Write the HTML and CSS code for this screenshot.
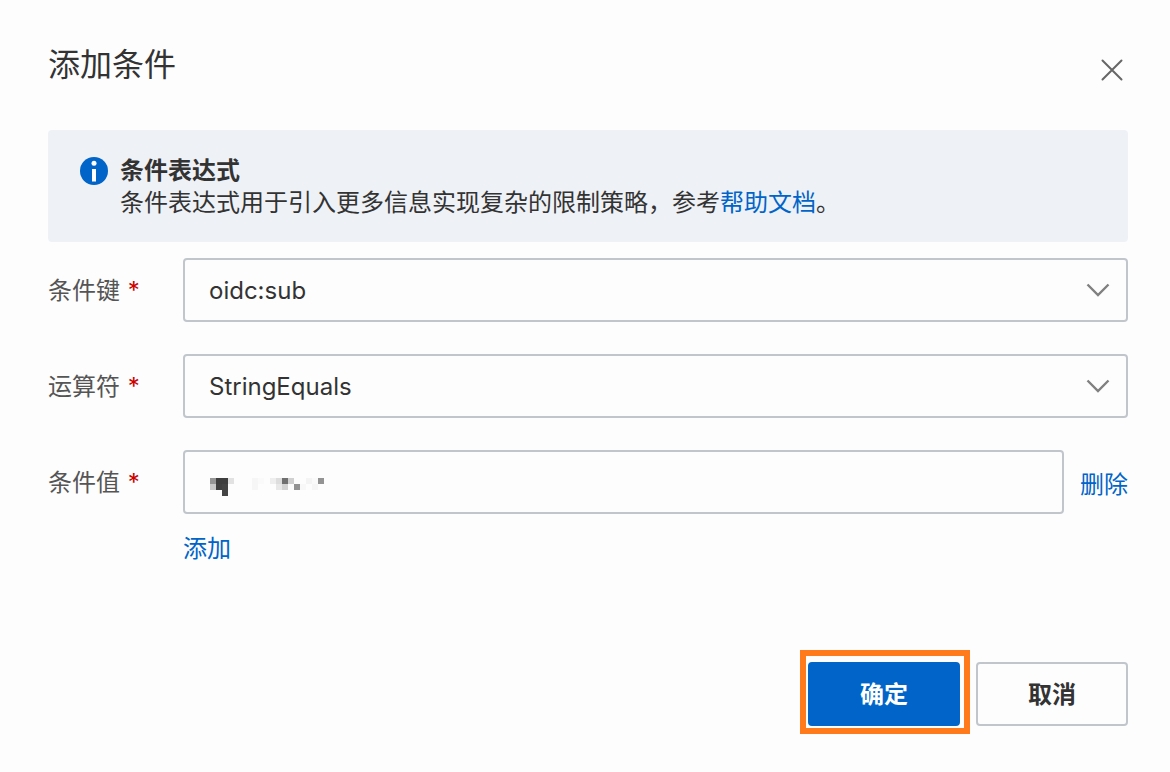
FILE: index.html
```html
<!DOCTYPE html>
<html lang="zh-CN">
  <head>
    <meta charset="UTF-8" />
    <meta name="viewport" content="width=device-width, initial-scale=1.0" />
    <title>添加条件</title>
    <link rel="stylesheet" href="styles.css">
  </head>
  <body>
    <div class="dialog">
      <div class="dialog-header">
        <h1 class="dialog-title">添加条件</h1>
        <button class="close-button" type="button" aria-label="关闭">
          <svg width="32" height="32" viewBox="0 0 32 32">
            <path d="M6.5 6.5L25.5 25.5M25.5 6.5L6.5 25.5" fill="none" stroke="#666666" stroke-width="2" stroke-linecap="round" />
          </svg>
        </button>
      </div>

      <div class="message">
        <svg class="message-icon" width="28" height="28" viewBox="0 0 28 28">
          <circle cx="14" cy="14" r="14" fill="#0064c8" />
          <circle cx="14" cy="6.3" r="2.5" fill="#ffffff" />
          <rect x="12" y="12" width="4" height="12.5" fill="#ffffff" />
        </svg>
        <div class="message-content">
          <h2 class="message-title">条件表达式</h2>
          <p>条件表达式用于引入更多信息实现复杂的限制策略，参考<a class="link" href="#">帮助文档</a>。</p>
        </div>
      </div>

      <form class="condition-form">
        <div class="form-row">
          <label class="form-label" for="conditionKey">条件键 <span class="required">*</span></label>
          <div class="select-box">
            <select class="field" id="conditionKey">
              <option>oidc:sub</option>
            </select>
            <svg class="arrow" width="24" height="14" viewBox="0 0 24 14">
              <path d="M1.5 1.5L12 12L22.5 1.5" fill="none" stroke="#808080" stroke-width="2.4" />
            </svg>
          </div>
        </div>

        <div class="form-row">
          <label class="form-label" for="operator">运算符 <span class="required">*</span></label>
          <div class="select-box">
            <select class="field" id="operator">
              <option>StringEquals</option>
            </select>
            <svg class="arrow" width="24" height="14" viewBox="0 0 24 14">
              <path d="M1.5 1.5L12 12L22.5 1.5" fill="none" stroke="#808080" stroke-width="2.4" />
            </svg>
          </div>
        </div>

        <div class="form-row">
          <label class="form-label" for="conditionValue">条件值 <span class="required">*</span></label>
          <div class="value-row">
            <div class="input-box">
              <input class="field" type="text" id="conditionValue" />
              <!-- masked value -->
              <svg class="mask" width="114" height="18" viewBox="0 0 19 3" shape-rendering="crispEdges">
                <rect x="0" y="0" width="1" height="1" fill="#969696" />
                <rect x="1" y="0" width="2" height="1" fill="#3e3e3e" />
                <rect x="3" y="0" width="1" height="1" fill="#e2e2e2" />
                <rect x="0" y="1" width="1" height="1" fill="#c9c9c9" />
                <rect x="1" y="1" width="1" height="1" fill="#404040" />
                <rect x="2" y="1" width="1" height="2" fill="#444444" />
                <rect x="8" y="0" width="1" height="1" fill="#fafafa" />
                <rect x="7" y="0" width="1" height="2" fill="#f6f6f6" />
                <rect x="10" y="0" width="1" height="1" fill="#eeeeee" />
                <rect x="11" y="0" width="1" height="1" fill="#dddddd" />
                <rect x="12" y="0" width="1" height="1" fill="#707070" />
                <rect x="13" y="0" width="1" height="1" fill="#d0d0d0" />
                <rect x="11" y="1" width="1" height="1" fill="#e8e8e8" />
                <rect x="12" y="1" width="1" height="1" fill="#d2d2d2" />
                <rect x="14" y="1" width="1" height="1" fill="#939393" />
                <rect x="15" y="1" width="1" height="1" fill="#f8f8f8" />
                <rect x="16" y="0" width="1" height="1" fill="#f4f4f4" />
                <rect x="17" y="0" width="1" height="1" fill="#fafafa" />
                <rect x="17" y="1" width="1" height="1" fill="#f6f6f6" />
                <rect x="18" y="0" width="1" height="1" fill="#939393" />
              </svg>
            </div>
            <button class="text-button" type="button">删除</button>
          </div>
        </div>
        <button class="text-button add-button" type="button">添加</button>

        <div class="dialog-footer">
          <div class="highlight">
            <button class="button button-primary" type="submit">确定</button>
          </div>
          <button class="button" type="button">取消</button>
        </div>
      </form>
    </div>
  </body>
</html>
```
FILE: styles.css
```css
* {
  box-sizing: border-box;
  margin: 0;
  padding: 0;
}
body {
  background-color: #fdfdfd;
  color: #333333;
  font-family: Inter, "Noto Sans CJK SC", sans-serif;
  font-size: 24px;
  line-height: 32px;
}
button,
input,
select {
  font: inherit;
  color: inherit;
}
button {
  cursor: pointer;
}
.dialog {
  padding: 40px 42px 40px 48px;
}
.dialog-header {
  display: flex;
  justify-content: space-between;
  align-items: center;
  height: 50px;
  margin-bottom: 40px;
}
.dialog-title {
  font-size: 32px;
  font-weight: 400;
  line-height: 50px;
}
.close-button {
  width: 32px;
  height: 32px;
  margin-top: 10px;
  background-color: transparent;
  border: none;
}
.close-button svg {
  display: block;
}
.message {
  display: flex;
  gap: 12px;
  padding: 25px 32px 23px;
  background-color: #eef1f6;
  border-radius: 4px;
}
.message-icon {
  flex-shrink: 0;
  margin-top: 2px;
}
.message-title {
  font-size: 24px;
  font-weight: 600;
}
.link {
  color: #0064c8;
  text-decoration: none;
}
.condition-form {
  margin-top: 16px;
}
.form-row {
  display: grid;
  grid-template-columns: 135px 1fr;
  align-items: center;
  margin-bottom: 32px;
}
.form-label {
  padding-top: 2px;
  color: #555555;
}
.required {
  margin-left: 1px;
  color: #cc0000;
}
.select-box,
.input-box {
  position: relative;
  flex: 1;
}
.field {
  display: block;
  width: 100%;
  height: 64px;
  padding: 2px 24px 0;
  background-color: transparent;
  border: 2px solid #c0c6cc;
  border-radius: 4px;
  appearance: none;
}
.arrow {
  position: absolute;
  top: 25px;
  right: 18px;
  pointer-events: none;
}
.mask {
  position: absolute;
  top: 28px;
  left: 27px;
  pointer-events: none;
}
.value-row {
  display: flex;
  align-items: center;
  gap: 16px;
}
.text-button {
  padding-top: 6px;
  background-color: transparent;
  border: none;
  color: #0064c8;
}
.add-button {
  display: block;
  margin: -19px 0 0 135px;
}
.dialog-footer {
  display: flex;
  justify-content: flex-end;
  gap: 16px;
  margin-top: 97px;
}
.button {
  width: 152px;
  height: 64px;
  padding-top: 2px;
  background-color: transparent;
  border: 2px solid #c0c6cc;
  border-radius: 4px;
  font-weight: 600;
}
.button-primary {
  display: block;
  background-color: #0064c8;
  border-color: #0064c8;
  color: #ffffff;
}
.highlight {
  position: relative;
}
.highlight::before {
  content: "";
  position: absolute;
  top: -12px;
  right: -10px;
  bottom: -8px;
  left: -8px;
  border: 6px solid #ff7a1a;
  pointer-events: none;
}
```
